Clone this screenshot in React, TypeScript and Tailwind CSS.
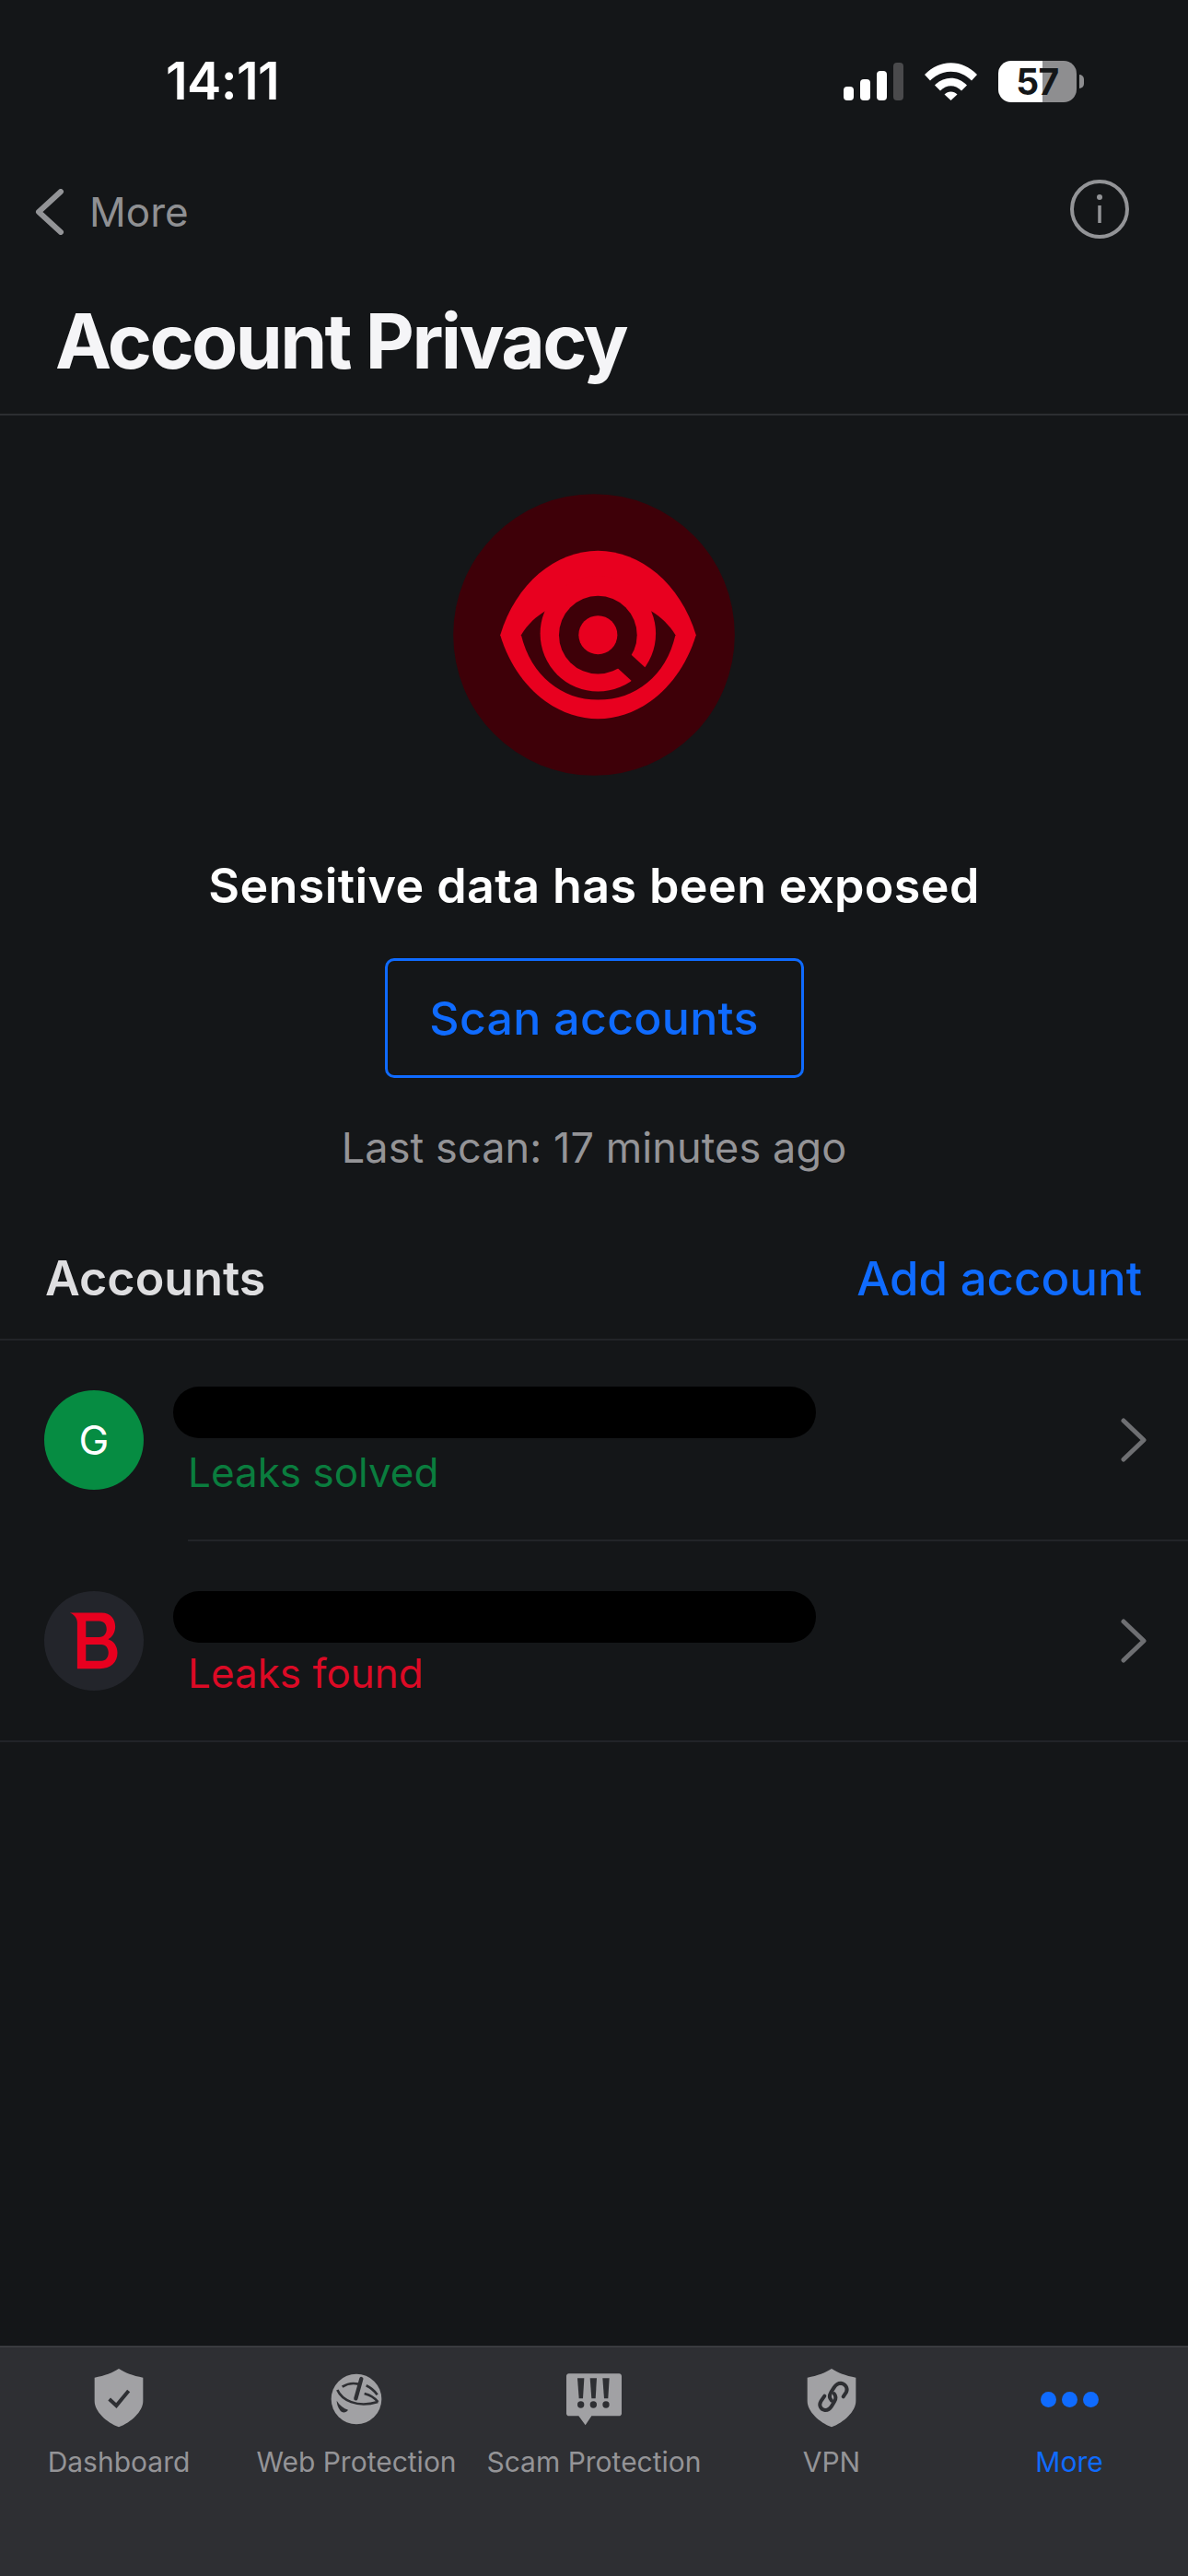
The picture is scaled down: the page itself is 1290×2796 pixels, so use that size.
import React from "react";

function Signal() {
  return (
    <svg width="65" height="41" viewBox="0 0 65 41">
      <rect x="0" y="26" width="11" height="15" rx="4" fill="#fff" />
      <rect x="18" y="18" width="11" height="23" rx="4" fill="#fff" />
      <rect x="36" y="9" width="11" height="32" rx="4" fill="#fff" />
      <rect x="54" y="0" width="11" height="41" rx="4" fill="#4a4a4c" />
    </svg>
  );
}

function Wifi() {
  return (
    <svg width="57" height="41" viewBox="0 0 57 41">
      <path d="M0 13 C16 -4 41 -4 57 13 L51 19.5 C38 6.5 19 6.5 6 19.5 Z" fill="#fff" />
      <path d="M11 24.5 C21 14 36 14 46 24.5 L40 30.5 C33 23.5 24 23.5 17 30.5 Z" fill="#fff" />
      <path d="M21.5 34.5 C25.5 30.5 31.5 30.5 35.5 34.5 L28.5 41 Z" fill="#fff" />
    </svg>
  );
}

function Eye() {
  return (
    <svg width="306" height="306" viewBox="97 48 916 917">
      <circle cx="555" cy="506.5" r="458" fill="#3e0008" />
      <path d="M250 507 C300 340 430 233 568 233 C706 233 836 340 887 507 C836 674 706 780 568 780 C430 780 300 674 250 507Z" fill="#e8001f" />
      <path d="M318 507 C340 470 368 447 395 430 L742 430 C775 450 800 475 820 507 C790 640 690 718 568 718 C450 718 350 640 318 507Z" fill="#3e0008" />
      <circle cx="568" cy="503" r="188" fill="#e8001f" />
      <circle cx="568" cy="507" r="127" fill="#3e0008" />
      <path d="M640 580 L716 650" stroke="#3e0008" strokeWidth="62" fill="none" />
      <circle cx="568" cy="507" r="63" fill="#e8001f" />
    </svg>
  );
}

function BLogo() {
  return (
    <svg width="108" height="108" viewBox="55 85 322 322">
      <circle cx="216" cy="246" r="161" fill="#23252b" />
      <path
        fillRule="evenodd"
        d="M138 155 H240 C272 155 285 178 285 200 C285 220 274 235 262 241 C280 247 292 263 292 285 C292 316 270 336 235 336 H162 V187 C162 172 152 161 138 155 Z M190 182 V234 H233 C249 234 257 222 257 208 C257 193 249 182 233 182 Z M190 258 V311 H240 C255 311 263 298 263 284 C263 270 255 258 240 258 Z"
        fill="#e8001f"
      />
    </svg>
  );
}

function ShieldCheck() {
  return (
    <svg width="80" height="80" viewBox="0 0 240 240">
      <path d="M120 21 C140 34 165 44 199 50 V126 C199 160 160 196 120 211 C80 196 41 160 41 126 V50 C75 44 100 34 120 21Z" fill="#a1a1a4" />
      <path d="M89 120 L112 141 L152 93" stroke="#2e2f33" strokeWidth="12" fill="none" />
    </svg>
  );
}

function WebIcon() {
  return (
    <svg width="80" height="80" viewBox="0 0 240 240">
      <circle cx="120" cy="120" r="82" fill="#a1a1a4" />
      <g stroke="#2e2f33" strokeWidth="8" fill="none">
        <path d="M74 80 C90 70 110 67 126 71" />
        <path d="M152 76 C165 82 178 92 188 106" />
        <path d="M146 102 C165 107 180 116 190 129" />
        <path d="M58 90 C72 122 120 150 190 129" />
        <path d="M136 54 L118 118" strokeWidth="13" strokeLinecap="round" />
      </g>
      <path d="M56 125 C65 140 78 150 93 155 C86 166 72 166 66 155 C60 146 56 135 56 125Z" fill="#2e2f33" />
    </svg>
  );
}

function ScamIcon() {
  return (
    <svg width="80" height="80" viewBox="0 0 240 240">
      <path d="M38 37 H202 C206 37 210 41 210 45 V167 C210 171 206 175 202 175 H112 L92 205 L70 175 H38 C34 175 30 171 30 167 V45 C30 41 34 37 38 37Z" fill="#a1a1a4" />
      <g fill="#2e2f33">
        <path d="M66 52 H88 L84 118 H71Z" />
        <path d="M107 52 H129 L125 118 H112Z" />
        <path d="M148 52 H170 L166 118 H153Z" />
        <circle cx="77" cy="138" r="11" />
        <circle cx="118" cy="138" r="11" />
        <circle cx="159" cy="138" r="11" />
      </g>
    </svg>
  );
}

function VpnIcon() {
  return (
    <svg width="80" height="80" viewBox="0 0 240 240">
      <path d="M120 21 C140 34 165 44 199 50 V126 C199 160 160 196 120 211 C80 196 41 160 41 126 V50 C75 44 100 34 120 21Z" fill="#a1a1a4" />
      <g stroke="#2e2f33" strokeWidth="12" fill="none" strokeLinecap="round" strokeLinejoin="round">
        <path d="M158 112 L168 97 C174 85 165 70 150 68 C140 68 133 74 128 82 L118 98 C112 108 113 118 120 125" />
        <path d="M97 110 L85 127 C78 140 84 154 98 156 C108 157 115 151 120 143 L129 128 C135 118 135 110 128 102" />
      </g>
    </svg>
  );
}

function MoreIcon() {
  return (
    <div className="flex h-[80px] items-center justify-center gap-[6px]">
      <span className="h-[17px] w-[17px] rounded-full bg-[#0f6bff]" />
      <span className="h-[17px] w-[17px] rounded-full bg-[#0f6bff]" />
      <span className="h-[17px] w-[17px] rounded-full bg-[#0f6bff]" />
    </div>
  );
}

function Tab({ icon, label, active }: { icon: React.ReactNode; label: string; active?: boolean }) {
  return (
    <div className="flex flex-col items-center">
      <div className="flex h-[80px] items-center justify-center">{icon}</div>
      <div className={`mt-[8px] whitespace-nowrap text-[30px] leading-[40px] ${active ? "text-[#0f6bff]" : "text-[#949497]"}`}>
        {label}
      </div>
    </div>
  );
}

function Chevron() {
  return (
    <svg width="28" height="48" viewBox="0 0 28 48">
      <path d="M3 3 L25 24 L3 45" stroke="#6e6f72" strokeWidth="5" fill="none" strokeLinecap="round" strokeLinejoin="round" />
    </svg>
  );
}

function AccountRow({ avatar, status, color, lower }: { avatar: React.ReactNode; status: string; color: string; lower?: boolean }) {
  return (
    <div className="relative flex h-[218px] items-start pl-[48px] pr-[45px] pt-[50px]">
      <div className="mt-[4px] h-[108px] w-[108px] shrink-0">{avatar}</div>
      <div className={`ml-[32px] flex w-[698px] flex-col ${lower ? "mt-[4px]" : ""}`}>
        <div className="h-[56px] rounded-full bg-black" />
        <div className={`ml-[16px] text-[44px] leading-[54px] ${color} ${lower ? "mt-[6px]" : "mt-[10px]"}`}>{status}</div>
      </div>
      <div className="ml-auto mt-[34px]">
        <Chevron />
      </div>
      {lower ? null : <div className="absolute bottom-0 left-[204px] right-0 h-[2px] bg-[#222428]" />}
    </div>
  );
}

export default function App() {
  return (
    <div className="flex h-[2796px] w-[1290px] flex-col overflow-hidden bg-[#141618] font-['Inter',sans-serif] text-white">
      <div className="flex h-[174px] items-start justify-between pl-[180px] pr-[113px] pt-[61px]">
        <div className="text-[56px] font-semibold leading-[54px] tracking-[-0.6px]">14:11</div>
        <div className="flex items-center pt-[5px]">
          <Signal />
          <div className="ml-[23px]">
            <Wifi />
          </div>
          <div className="ml-[23px] flex h-[45px] w-[85px] items-center justify-center rounded-[14px] bg-[linear-gradient(90deg,#ffffff_56%,#8e8e90_56%)] text-[39px] font-bold leading-none tracking-[-0.5px] text-[#141618]">
            57
          </div>
          <div className="ml-[3px] h-[15px] w-[5px] rounded-r-full bg-[#8e8e90]" />
        </div>
      </div>

      <div className="flex h-[112px] items-center justify-between pl-[38px] pr-[64px]">
        <div className="flex items-center">
          <svg width="32" height="50" viewBox="0 0 32 50">
            <path d="M28 3 L4 25 L28 47" stroke="#939497" strokeWidth="6" fill="none" strokeLinecap="round" strokeLinejoin="round" />
          </svg>
          <span className="ml-[27px] text-[44px] leading-[54px] text-[#8f9093]">More</span>
        </div>
        <svg width="64" height="64" viewBox="0 0 64 64" className="mt-[-6px]">
          <circle cx="32" cy="32" r="30" stroke="#939497" strokeWidth="4" fill="none" />
          <circle cx="32" cy="19" r="3" fill="#939497" />
          <path d="M32 28 V47" stroke="#939497" strokeWidth="3.5" />
        </svg>
      </div>

      <div className="h-[165px] border-b-2 border-[#2c2e31] pl-[60px] pt-[38px]">
        <div className="text-[82px] font-bold leading-[94px] tracking-[-2.6px] text-[#f5f5f7]">Account Privacy</div>
      </div>

      <div className="flex flex-1 flex-col">
        <div className="flex flex-col items-center pt-[85px]">
          <Eye />
          <div className="mt-[90px] text-[52px] font-semibold leading-[60px] tracking-[0.4px]">Sensitive data has been exposed</div>
          <div className="mt-[48px] flex h-[130px] w-[455px] items-center justify-center rounded-[10px] border-[3px] border-[#0f6bff] text-[50px] font-medium tracking-[0.3px] text-[#0f6bff]">
            Scan accounts
          </div>
          <div className="mt-[48px] text-[45px] leading-[56px] tracking-[0.1px] text-[#949497]">Last scan: 17 minutes ago</div>
        </div>

        <div className="mt-[84px] flex h-[97px] items-start justify-between border-b-2 border-[#222428] pl-[49px] pr-[50px]">
          <div className="text-[52px] font-semibold leading-[60px] text-[#dedee0]">Accounts</div>
          <div className="text-[51px] font-medium leading-[60px] text-[#0f6bff]">Add account</div>
        </div>

        <AccountRow
          avatar={
            <div className="flex h-full w-full items-center justify-center rounded-full bg-[#068c42] text-[44px] text-white">G</div>
          }
          status="Leaks solved"
          color="text-[#0a7d3e]"
        />
        <AccountRow avatar={<BLogo />} status="Leaks found" color="text-[#dc0a25]" lower />
        <div className="-mt-[2px] h-[2px] w-full bg-[#222428]" />
      </div>

      <div className="grid h-[250px] grid-cols-5 border-t-2 border-[#3a3b3f] bg-[#2e2f33] pt-[16px]">
        <Tab icon={<ShieldCheck />} label="Dashboard" />
        <Tab icon={<WebIcon />} label="Web Protection" />
        <Tab icon={<ScamIcon />} label="Scam Protection" />
        <Tab icon={<VpnIcon />} label="VPN" />
        <Tab icon={<MoreIcon />} label="More" active />
      </div>
    </div>
  );
}
